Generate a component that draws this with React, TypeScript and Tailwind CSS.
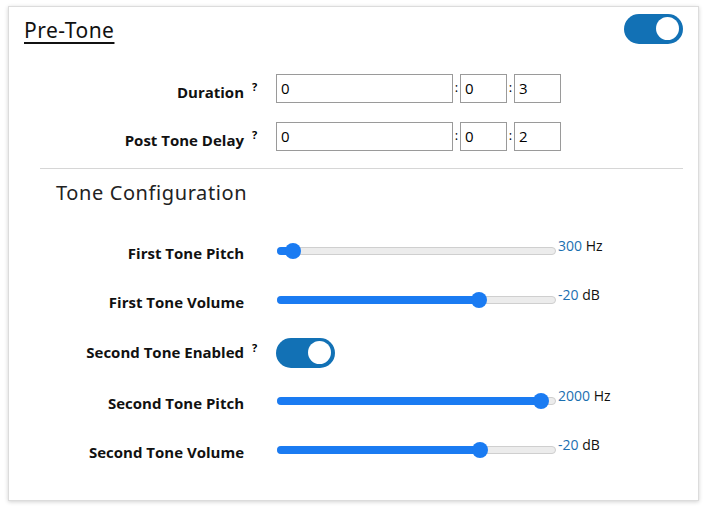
import React from 'react';

const Toggle: React.FC = () => (
  <div className="w-[59px] h-[30px] rounded-full bg-[#1271b5] flex items-center justify-end pr-[4px]">
    <div className="w-[23px] h-[23px] rounded-full bg-white" />
  </div>
);

const Label: React.FC<{ text: string }> = ({ text }) => (
  <div className="w-[235px] text-right text-[15px] font-bold text-[#111]">{text}</div>
);

const TimeInput: React.FC<{ value: string; w: string }> = ({ value, w }) => (
  <div className={`${w} h-[29px] border border-[#9a9a9a] flex items-center pl-[4px] text-[15px] text-black bg-white`}>
    {value}
  </div>
);

const TimeRow: React.FC<{ label: string; sec: string }> = ({ label, sec }) => (
  <div className="flex items-center h-[29px]">
    <div className="flex items-center pt-[9px]">
      <Label text={label} />
      <span className="w-[32px] pl-[8px] text-[11px] font-bold -mt-[10px]">?</span>
    </div>
    <TimeInput value="0" w="w-[177px]" />
    <span className="w-[7px] text-center text-[13px]">:</span>
    <TimeInput value="0" w="w-[47px]" />
    <span className="w-[7px] text-center text-[13px]">:</span>
    <TimeInput value={sec} w="w-[47px]" />
  </div>
);

const Slider: React.FC<{ label: string; pct: number; value: string; unit: string }> = ({ label, pct, value, unit }) => (
  <div className="flex items-center h-[24px]">
    <div className="pt-[6px]">
      <Label text={label} />
    </div>
    <div className="w-[33px]" />
    <div className="relative w-[279px] h-[8px] rounded-full bg-[#ececec] border border-[#cfcfcf]">
      <div className="absolute -left-px -top-px h-[8px] rounded-full bg-[#1a7bf2]" style={{ width: `${pct}%` }} />
      <div
        className="absolute top-1/2 w-[16px] h-[16px] rounded-full bg-[#1a7bf2] -translate-x-1/2 -translate-y-1/2"
        style={{ left: `${pct}%` }}
      />
    </div>
    <div className="-mt-[11px] pl-[2px] text-[14px] whitespace-nowrap">
      <span className="text-[#1b6fb0]">{value}</span> <span className="text-[#111]">{unit}</span>
    </div>
  </div>
);

export default function App() {
  return (
    <div className="w-[708px] h-[509px] bg-white pt-[6px] pl-[8px]" style={{ fontFamily: '"Open Sans", "Noto Sans", sans-serif' }}>
      <div className="w-[691px] h-[495px] bg-white border border-[#dcdcdc] shadow-[0_1px_4px_rgba(0,0,0,0.18)]">
        <div className="flex items-center justify-between pl-[15px] pr-[15px] pt-[4px]">
          <h2
            className="text-[21px] text-[#111] underline underline-offset-[4px] decoration-[1.5px] pt-[4px]"
            style={{ fontFamily: '"Noto Sans", sans-serif', letterSpacing: '0.5px' }}
          >
            Pre-Tone
          </h2>
          <Toggle />
        </div>

        <div className="mt-[27px] flex flex-col gap-[19px]">
          <TimeRow label="Duration" sec="3" />
          <TimeRow label="Post Tone Delay" sec="2" />
        </div>

        <div className="ml-[31px] mr-[15px] mt-[17px] border-t border-[#d6d6d6]" />

        <h3
          className="pl-[47px] mt-[9px] text-[20px] text-[#222]"
          style={{ fontFamily: '"Noto Sans", sans-serif', letterSpacing: '0.6px' }}
        >
          Tone Configuration
        </h3>

        <div className="mt-[31px] flex flex-col">
          <Slider label="First Tone Pitch" pct={5.5} value="300" unit="Hz" />
          <div className="h-[25px]" />
          <Slider label="First Tone Volume" pct={72.5} value="-20" unit="dB" />
          <div className="h-[26px]" />
          <div className="flex items-center h-[30px]">
            <Label text="Second Tone Enabled" />
            <span className="w-[32px] pl-[8px] text-[11px] font-bold -mt-[9px]">?</span>
            <Toggle />
          </div>
          <div className="h-[21px]" />
          <Slider label="Second Tone Pitch" pct={95} value="2000" unit="Hz" />
          <div className="h-[25px]" />
          <Slider label="Second Tone Volume" pct={73} value="-20" unit="dB" />
        </div>
      </div>
    </div>
  );
}
